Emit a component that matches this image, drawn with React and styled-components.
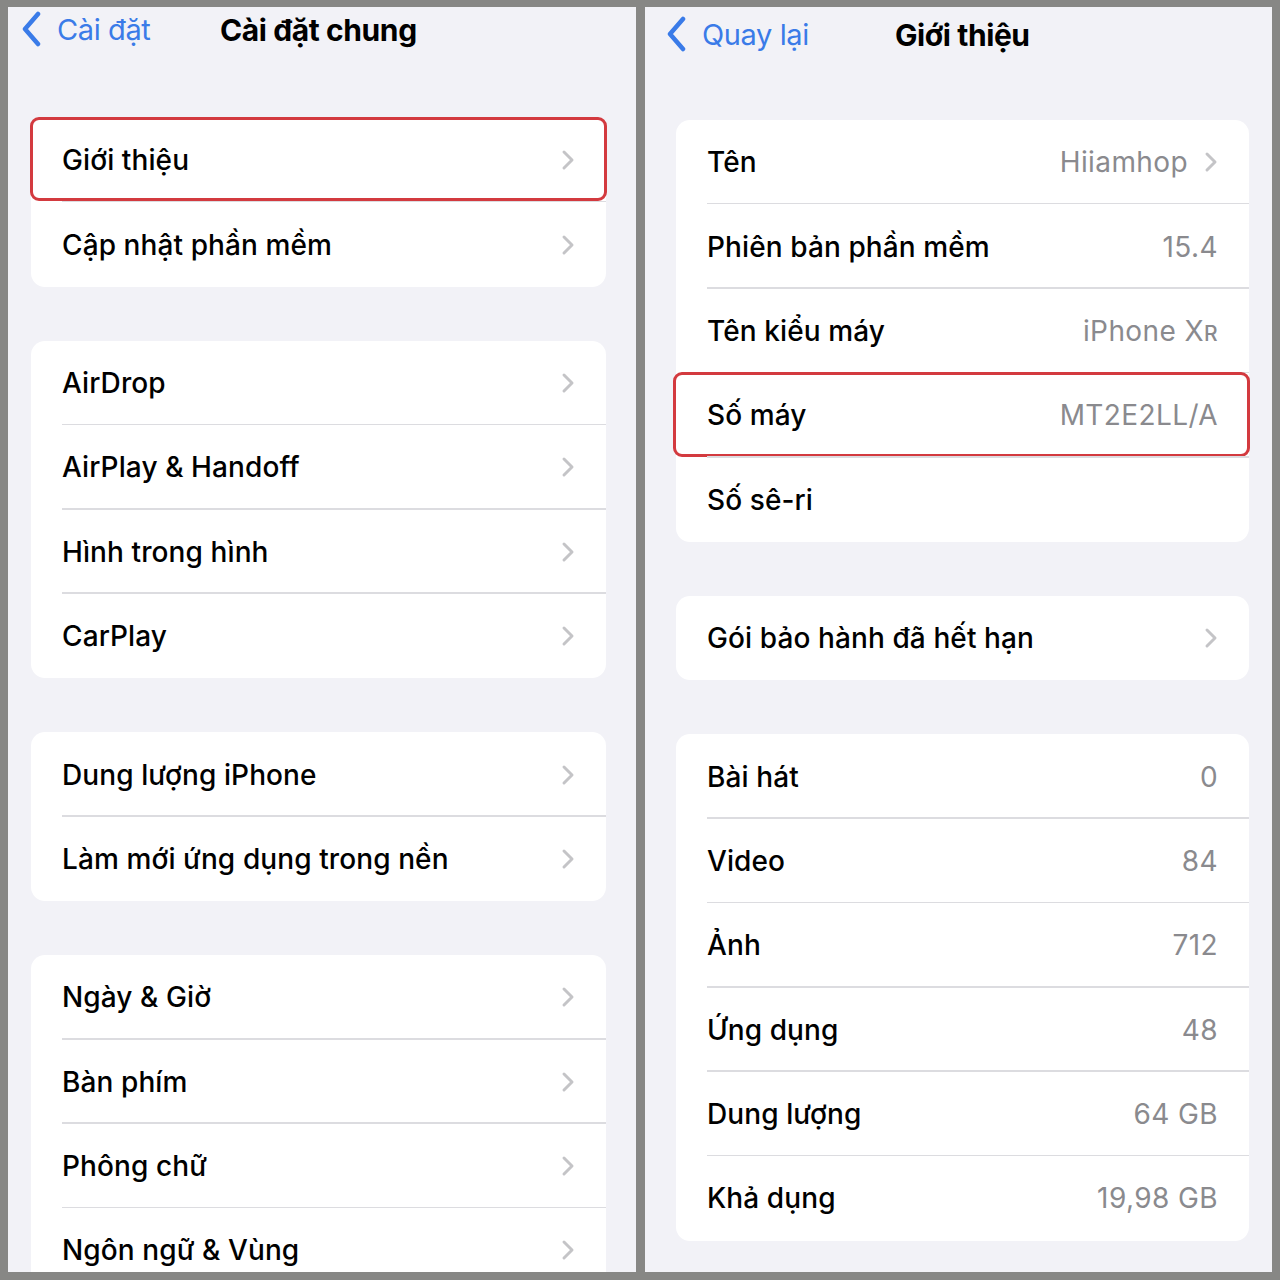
import React from "react";
import styled, { createGlobalStyle } from "styled-components";

const Global = createGlobalStyle`
  html, body { margin: 0; padding: 0; }
  body { font-family: Inter, "Noto Sans", sans-serif; -webkit-font-smoothing: antialiased; }
`;

const Frame = styled.div`
  width: 1280px;
  height: 1280px;
  box-sizing: border-box;
  background: #878785;
  padding: 7px 8px 8px 8px;
  display: flex;
  gap: 9px;
`;

const Panel = styled.div`
  flex: 0 0 ${(p) => p.$w}px;
  background: #f2f2f7;
  overflow: hidden;
  box-sizing: border-box;
  padding: 0 ${(p) => p.$pr}px 0 ${(p) => p.$pl}px;
  display: flex;
  flex-direction: column;
`;

const Header = styled.div`
  flex: none;
  height: ${(p) => p.$h}px;
  display: flex;
  align-items: flex-start;
  padding-top: ${(p) => p.$top}px;
  box-sizing: border-box;
  margin-left: ${(p) => p.$ml}px;
`;

const Back = styled.div`
  display: flex;
  align-items: center;
  gap: 14px;
  color: #3a7be8;
  font-size: 29px;
  letter-spacing: -0.4px;
  width: ${(p) => p.$w}px;
  flex: none;
`;

const Title = styled.div`
  font-weight: 700;
  font-size: 30px;
  letter-spacing: -0.4px;
  color: #000;
  padding-top: 1px;
`;

const Card = styled.div`
  background: #fff;
  border-radius: 14px;
  margin-bottom: ${(p) => p.$mb}px;
  flex: none;
`;

const Row = styled.div`
  position: relative;
  height: ${(p) => p.$h || 84.4}px;
  display: flex;
  align-items: center;
  padding: 0 ${(p) => p.$pr}px 0 31px;
  box-sizing: border-box;
  font-size: 28px;
  font-weight: 500;
  letter-spacing: 0.1px;
  color: #000;
  &::after {
    content: "";
    display: ${(p) => (p.$last ? "none" : "block")};
    position: absolute;
    left: 31px;
    right: 0;
    bottom: 0;
    height: 1.5px;
    background: #dcdce0;
  }
`;

const Highlight = styled.div`
  position: absolute;
  inset: ${(p) => p.$inset};
  border: 3px solid #d33a3f;
  border-radius: 9px;
  pointer-events: none;
`;

const Label = styled.span`
  flex: 1;
`;

const Value = styled.span`
  color: #8a8a8e;
  font-size: 28px;
  font-weight: 400;
  letter-spacing: 0.4px;
`;

const Small = styled.span`
  font-size: 21px;
  font-weight: 500;
`;

const ChevronWrap = styled.span`
  display: flex;
  margin-left: ${(p) => p.$ml || 0}px;
`;

const Chevron = ({ ml }) => (
  <ChevronWrap $ml={ml}>
    <svg width="14" height="22" viewBox="0 0 14 22">
      <path d="M3 3 L11 11 L3 19" fill="none" stroke="#c4c4c7" strokeWidth="3" strokeLinecap="round" strokeLinejoin="round" />
    </svg>
  </ChevronWrap>
);

const BackChevron = () => (
  <svg width="22" height="36" viewBox="0 0 22 36">
    <path d="M17 3 L4 18 L17 33" fill="none" stroke="#3a7be8" strokeWidth="4.5" strokeLinecap="round" strokeLinejoin="round" />
  </svg>
);

const leftGroups = [
  ["Giới thiệu", "Cập nhật phần mềm"],
  ["AirDrop", "AirPlay & Handoff", "Hình trong hình", "CarPlay"],
  ["Dung lượng iPhone", "Làm mới ứng dụng trong nền"],
  ["Ngày & Giờ", "Bàn phím", "Phông chữ", "Ngôn ngữ & Vùng"],
];

const rightGroups = [
  [
    { l: "Tên", v: "Hiiamhop", c: true },
    { l: "Phiên bản phần mềm", v: "15.4" },
    { l: "Tên kiểu máy", v: (<>iPhone X<Small>R</Small></>) },
    { l: "Số máy", v: "MT2E2LL/A", hl: true },
    { l: "Số sê-ri", v: "" },
  ],
  [{ l: "Gói bảo hành đã hết hạn", c: true, chevOnly: true }],
  [
    { l: "Bài hát", v: "0" },
    { l: "Video", v: "84" },
    { l: "Ảnh", v: "712" },
    { l: "Ứng dụng", v: "48" },
    { l: "Dung lượng", v: "64 GB" },
    { l: "Khả dụng", v: "19,98 GB" },
  ],
];

export default function App() {
  return (
    <>
      <Global />
      <Frame>
        <Panel $w={628} $pl={23} $pr={30}>
          <Header $h={111} $top={4} $ml={-10}>
            <Back $w={199}>
              <BackChevron />
              <span>Cài đặt</span>
            </Back>
            <Title>Cài đặt chung</Title>
          </Header>
          {leftGroups.map((g, gi) => (
            <Card key={gi} $mb={54}>
              {g.map((t, i) => (
                <Row key={t} $pr={31} $last={i === g.length - 1 && gi !== 3}>
                  <Label>{t}</Label>
                  <Chevron />
                  {gi === 0 && i === 0 && <Highlight $inset="-1px -1px 1px -1px" />}
                </Row>
              ))}
            </Card>
          ))}
        </Panel>
        <Panel $w={627} $pl={31} $pr={23}>
          <Header $h={113} $top={9} $ml={-10}>
            <Back $w={229}>
              <BackChevron />
              <span>Quay lại</span>
            </Back>
            <Title>Giới thiệu</Title>
          </Header>
          {rightGroups.map((g, gi) => (
            <Card key={gi} $mb={54}>
              {g.map((r, i) => (
                <Row key={r.l} $pr={31} $last={i === g.length - 1}>
                  <Label>{r.l}</Label>
                  {r.v ? <Value>{r.v}</Value> : null}
                  {r.c && <Chevron ml={r.chevOnly ? 0 : 16} />}
                  {r.hl && <Highlight $inset="-1px -1px 1px -3px" />}
                </Row>
              ))}
            </Card>
          ))}
        </Panel>
      </Frame>
    </>
  );
}
